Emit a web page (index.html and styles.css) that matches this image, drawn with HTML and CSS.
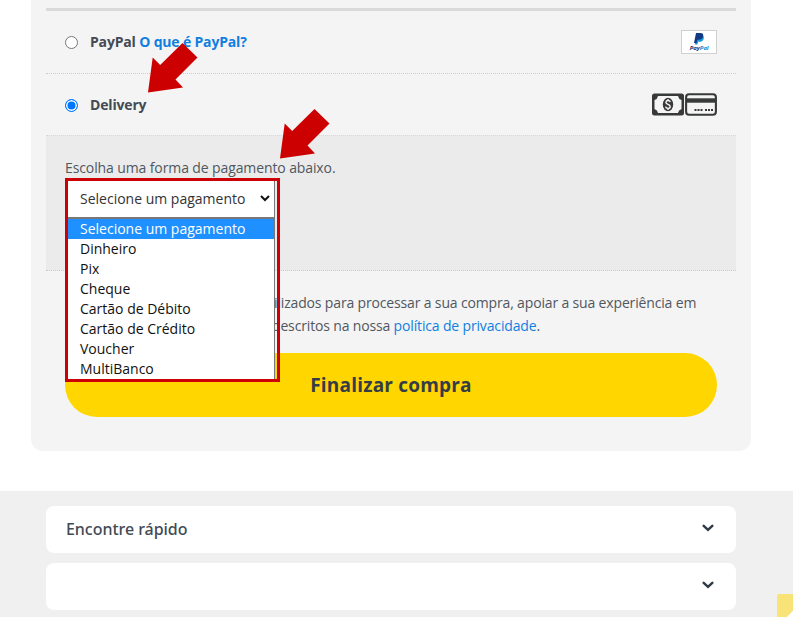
FILE: index.html
```html
<!DOCTYPE html>
<html lang="pt">
<head>
<meta charset="utf-8">
<title>Finalizar compra</title>
<link rel="stylesheet" href="styles.css">
</head>
<body>
<main class="checkout">
  <div class="methods">
    <div class="method">
      <span class="radio"></span>
      <span class="method-name">PayPal <a class="link">O que é PayPal?</a></span>
      <svg class="paypal" width="36" height="24" viewBox="0 0 36 24">
        <rect x=".5" y=".5" width="35" height="23" fill="#fff" stroke="#d0d0d0"/>
        <path d="M16.2 5.2h5.2q2 .8 1.4 3.2-.8 3.4-4.5 3.4h-1.2l-.6 2.800h-2.700z" fill="#169bd7"/>
        <path d="M15 3h4.500q3.200.2 2.700 3-.6 3.800-4.600 3.800h-1.400l-.6 3.200H13z" fill="#123984"/>
        <text class="paypal-word" x="8.800" y="20"><tspan fill="#19306f">Pay</tspan><tspan fill="#1689d2">Pal</tspan></text>
      </svg>
    </div>
    <div class="method">
      <span class="radio radio-on"></span>
      <span class="method-name">Delivery</span>
      <svg class="cash" width="65" height="23" viewBox="0 0 65 23">
        <rect width="32" height="22" y=".5" rx="2.500" fill="#373a39"/>
        <path d="M6 3h20q.5 3 3.500 4v9q-3 1-3.500 4H6q-.5-3-3.500-4V7Q5.500 6 6 3z" fill="#f4f4f4"/>
        <ellipse cx="16" cy="11.500" rx="5.200" ry="6.800" fill="#373a39"/>
        <path d="M18.300 9q-.5-1.500-2.300-1.500T13.900 9.300q0 1.400 2.100 2.100t2.200 2.100q0 1.900-2.200 1.900t-2.400-1.700M16 6v1.500M16 15.500V17" fill="none" stroke="#f4f4f4" stroke-width="1.400"/>
        <rect x="34.100" y="1.200" width="29.800" height="20.600" rx="3" fill="#f4f4f4" stroke="#373a39" stroke-width="2.100"/>
        <path d="M34 5.300h30v4.400H34z" fill="#373a39"/>
        <path d="M42.500 17h8M53 17h8" stroke="#373a39" stroke-width="2" stroke-dasharray="2 1"/>
      </svg>
    </div>
    <div class="payment-box">
      <p class="hint">Escolha uma forma de pagamento abaixo.</p>
      <div class="picker">
        <div class="picker-body">
          <div class="select">Selecione um pagamento
            <svg width="10" height="7" viewBox="0 0 10 7"><path d="M1 1l4 4 4-4" fill="none" stroke="#111" stroke-width="2"/></svg>
          </div>
          <ul class="options">
            <li class="option active">Selecione um pagamento</li>
            <li class="option">Dinheiro</li>
            <li class="option">Pix</li>
            <li class="option">Cheque</li>
            <li class="option">Cartão de Débito</li>
            <li class="option">Cartão de Crédito</li>
            <li class="option">Voucher</li>
            <li class="option">MultiBanco</li>
          </ul>
        </div>
      </div>
    </div>
  </div>
  <p class="privacy"><span class="line">ilizados para processar a sua compra, apoiar a sua experiência em</span><span class="line">descritos na nossa <a class="link">política de privacidade</a>.</span></p>
  <button class="submit">Finalizar compra</button>
  <svg class="arrow arrow-delivery" width="50" height="50" viewBox="0 0 50 50"><path d="M0 49.500L4.700 14.500 12.200 22 34.500 0 49.500 14.500 27.500 36.500 35 44.500z" fill="#c00"/></svg>
  <svg class="arrow arrow-select" width="50" height="50" viewBox="0 0 50 50"><path d="M0 49.500L4.700 14.500 12.200 22 34.500 0 49.500 14.500 27.500 36.500 35 44.500z" fill="#c00"/></svg>
</main>
<footer class="footer">
  <div class="fold"><span class="fold-title">Encontre rápido</span><svg width="12" height="8" viewBox="0 0 12 8"><path d="M1.700 1.800L6 5.800l4.300-4" fill="none" stroke="#2f3b47" stroke-width="2.500" stroke-linecap="round"/></svg></div>
  <div class="fold"><span class="fold-title"></span><svg width="12" height="8" viewBox="0 0 12 8"><path d="M1.700 1.800L6 5.800l4.300-4" fill="none" stroke="#2f3b47" stroke-width="2.500" stroke-linecap="round"/></svg></div>
</footer>
<svg class="corner" width="16" height="23" viewBox="0 0 16 23"><path d="M2 0h14v17l-6 6H0V2q0-2 2-2z" fill="#f8e377"/><path d="M16 17v6h-6z" fill="#fff"/></svg>
</body>
</html>
```
FILE: styles.css
```css
* { box-sizing: border-box; }
body {
  margin: 0;
  height: 617px;
  overflow: hidden;
  position: relative;
  background: #fff;
  color: #434a54;
  font: 14px/23px "Open Sans", sans-serif;
}
.checkout {
  position: relative;
  width: 720px;
  height: 451px;
  margin-left: 31px;
  padding: 8px 15px 0;
  background: #f4f4f4;
  border-radius: 0 0 12px 12px;
}
.methods { border-top: 3px solid #dadada; }
.method {
  display: flex;
  align-items: center;
  height: 61px;
  padding: 0 19px;
}
.method:first-child { height: 63px; border-bottom: 1px dotted #ccc; }
.method-name {
  flex: 1;
  padding-bottom: 1px;
  font-weight: 700;
  letter-spacing: -.17px;
}
.link { color: #107fe0; }
.radio {
  width: 13px;
  height: 13px;
  margin-right: 12px;
  border: 1px solid #767676;
  border-radius: 50%;
  background: #fff;
}
.radio-on {
  margin-top: 2px;
  border-color: #0075ff;
  background: #0075ff;
  box-shadow: inset 0 0 0 1.5px #fff;
}
.paypal-word { font: italic 700 6px "Open Sans", sans-serif; letter-spacing: -.1px; }
.payment-box {
  height: 136px;
  padding: 20px 19px 0;
  background: #ebebeb;
  border-top: 1px dotted #d8d8d8;
  border-bottom: 1px dotted #ccc;
}
.hint { margin: 0; color: #50575f; letter-spacing: -.11px; }
.picker {
  position: absolute;
  z-index: 1;
  left: 34px;
  top: 178px;
  width: 215px;
  height: 204px;
  border: 3px solid #cc0006;
}
.picker-body {
  width: 207px;
  height: 198px;
  background: #fff;
  border-right: 1px solid #777;
  color: #111;
}
.select {
  display: flex;
  align-items: center;
  justify-content: space-between;
  height: 36px;
  padding: 0 4px 2px 12px;
  color: #333;
}
.options {
  list-style: none;
  margin: 0;
  padding: 0;
  border-top: 2px solid #777;
}
.option { height: 20px; padding-left: 12px; line-height: 20px; }
.active { background: #1e90ff; color: #fff; }
.privacy {
  display: flex;
  flex-direction: column;
  align-items: flex-start;
  margin: 20px 0 0;
  padding-left: 228px;
  color: #50575f;
  letter-spacing: -.155px;
}
.line { white-space: nowrap; }
.line + .line { margin-left: -2px; }
.submit {
  display: block;
  width: 652px;
  height: 64px;
  margin: 16px 19px 0;
  border: 0;
  border-radius: 32px;
  background: #ffd600;
  color: #343d46;
  font: 700 19px "Open Sans", sans-serif;
  letter-spacing: .2px;
}
.arrow { position: absolute; z-index: 2; }
.arrow-delivery { left: 117px; top: 43px; }
.arrow-select { left: 249px; top: 109px; }
.footer {
  display: flex;
  flex-direction: column;
  gap: 10px;
  height: 126px;
  margin-top: 40px;
  padding: 15px 57px 0 46px;
  background: #f0f0f0;
}
.fold {
  display: flex;
  align-items: center;
  justify-content: space-between;
  flex: none;
  height: 47px;
  padding: 0 22px 3px 20px;
  border-radius: 8px;
  background: #fff;
  font: 500 16px/23px "Noto Sans", sans-serif;
}
.fold-title { padding-top: 2px; letter-spacing: -.04px; }
.corner { position: absolute; right: 0; bottom: 0; }
```
